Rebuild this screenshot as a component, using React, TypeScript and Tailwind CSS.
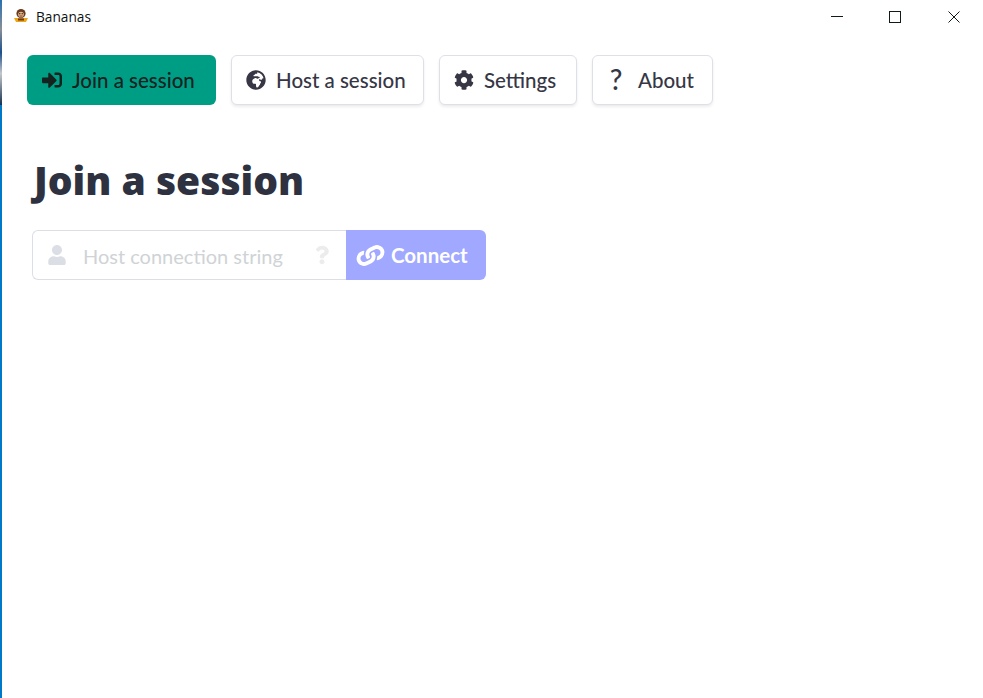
import type { ReactNode } from "react";
import { FaCog, FaGlobeAfrica, FaLink, FaQuestion, FaSignInAlt, FaUser } from "react-icons/fa";

const font = "font-['Lato','Noto_Sans',sans-serif]";

function NavButton({ icon, label, active, className }: { icon: ReactNode; label: string; active?: boolean; className: string }) {
  return (
    <button
      className={`flex h-[50px] items-center rounded-md text-[20.5px] font-medium ${className} ${
        active
          ? "bg-[#009d85] text-[#14231f]"
          : "border border-[#dfdfe8] bg-white text-[#363645] shadow-[0_2px_3px_rgba(10,10,10,0.08)]"
      }`}
    >
      {icon}
      <span>{label}</span>
    </button>
  );
}

// little monkey with a banana, the app's window icon
function AppIcon() {
  return (
    <svg width="16" height="16" viewBox="0 0 16 16" className="shrink-0">
      <path d="M1 10h14l-2 4H3z" fill="#eda51a" />
      <circle cx="8" cy="5.6" r="4.6" fill="#6b3a1e" />
      <circle cx="8" cy="6.6" r="2.8" fill="#e6b98c" />
      <circle cx="6.8" cy="5.8" r="0.7" fill="#1c1c1c" />
      <circle cx="9.2" cy="5.8" r="0.7" fill="#1c1c1c" />
      <path d="M6.5 8h3" stroke="#7a2c1a" strokeWidth="0.9" />
      <path d="M5 10.5h6v2H5z" fill="#6b3a1e" />
    </svg>
  );
}

function TitleBar() {
  return (
    <div className="flex h-[33px] items-center justify-between">
      <div className="flex items-center gap-[7px] pl-[11px] font-['Open_Sans','Liberation_Sans',sans-serif] text-[13.7px] text-[#111]">
        <AppIcon />
        <span className="pt-[1px]">Bananas</span>
      </div>
      <div className="flex items-center text-[#101a18]">
        <span className="flex h-[33px] w-[58px] items-center justify-center">
          <span className="h-px w-3 bg-[#101a18]" />
        </span>
        <span className="flex h-[33px] w-[58px] items-center justify-center">
          <span className="h-3 w-3 border border-[#101a18]" />
        </span>
        <span className="flex h-[33px] w-[59px] items-center justify-center pl-[1px]">
          <svg width="12" height="12" viewBox="0 0 12 12">
            <path d="M0.5 0.5l11 11M11.5 0.5l-11 11" stroke="#101a18" strokeWidth="1" fill="none" />
          </svg>
        </span>
      </div>
    </div>
  );
}

export default function App() {
  return (
    <div className={`flex h-[698px] w-[983px] overflow-hidden bg-white ${font}`}>
      <div className="flex w-[2px] shrink-0 flex-col bg-[#0078c8]">
        <div className="h-[105px] bg-[linear-gradient(180deg,#2a6fb0_0%,#8a8f98_28%,#1d4f8a_50%,#c4c8cc_70%,#16304f_100%)]" />
      </div>
      <div className="min-w-0 flex-1">
        <TitleBar />
        <div className="flex gap-[15px] pl-[25px] pt-[22px]">
          <NavButton
            active
            className="w-[189px] pl-[15px]"
            icon={<FaSignInAlt className="mr-[10px] h-[20px] w-[20px]" />}
            label="Join a session"
          />
          <NavButton
            className="w-[193px] pl-[14px]"
            icon={<FaGlobeAfrica className="mr-[10px] h-[20px] w-[20px]" />}
            label="Host a session"
          />
          <NavButton
            className="w-[138px] pl-[14px]"
            icon={<FaCog className="mr-[10px] h-[20px] w-[20px]" />}
            label="Settings"
          />
          <NavButton
            className="w-[121px] pl-[14px]"
            icon={<span className="mb-[3px] mr-[13px] w-[18px] text-center text-[28px] leading-none font-medium">?</span>}
            label="About"
          />
        </div>

        <div className="pl-[30px]">
          <h1 className="ml-[2px] mt-[47px] font-['Noto_Sans',sans-serif] text-[39px] font-black leading-[56px] tracking-normal text-[#2e3140]">Join a session</h1>
          <div className="mt-[22px] flex h-[50px] w-[454px]">
            <div className="flex w-[314px] items-center rounded-l-md border border-r-0 border-[#dbdfe5] bg-white">
              <FaUser className="ml-[14px] h-[20px] w-[20px] text-[#dbdfe5]" />
              <span className="ml-[16px] pt-[2px] text-[20px] text-[#cfd3d6]">Host connection string</span>
              <FaQuestion className="ml-auto mr-[17px] h-[20px] w-[14px] text-[#ececec]" />
            </div>
            <button className="flex w-[140px] items-center rounded-r-md bg-[#a0a8ff] pl-[12px] text-[20.5px] font-bold text-white">
              <FaLink className="mr-[8px] h-[25px] w-[25px] rotate-[20deg]" />
              <span>Connect</span>
            </button>
          </div>
        </div>
      </div>
    </div>
  );
}
